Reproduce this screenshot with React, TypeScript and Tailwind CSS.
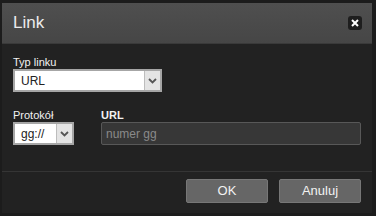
import * as React from "react"

const Chevron = () => (
  <svg width="9" height="6" viewBox="0 0 9 6" className="block">
    <path d="M1 1 L4.5 4.5 L8 1" fill="none" stroke="#555" strokeWidth="1.8" />
  </svg>
)

const SelectBox = ({ value, width }: { value: string; width: string }) => (
  <div className={`flex h-[23px] ${width} border-2 border-[#a6a6a6] bg-white`}>
    <div className="flex flex-1 items-center pl-[6px] text-[12px] text-[#222]">{value}</div>
    <div className="flex w-[16px] items-center justify-center border-l border-[#bdbdbd] bg-[#e4e4e4]">
      <Chevron />
    </div>
  </div>
)

export default function App() {
  return (
    <div className="h-[216px] w-[376px] bg-[#1c1c1c] pt-[3px] pl-[2px] font-['Liberation_Sans',Arial,sans-serif]">
      <div className="flex h-[210px] w-[370px] flex-col bg-[#222222]">
        <div className="flex h-[41px] items-center justify-between border-b border-[#3a3a3a] bg-gradient-to-b from-[#4f4f4f] to-[#464646] pr-[10px] pl-[11px]">
          <span className="text-[17px] text-[#ececec]">Link</span>
          <button className="flex h-[14px] w-[14px] items-center justify-center rounded-[3px] bg-[#1e1e1e]">
            <svg width="8" height="8" viewBox="0 0 8 8">
              <path d="M1 1 L7 7 M7 1 L1 7" stroke="#fff" strokeWidth="2" />
            </svg>
          </button>
        </div>

        <div className="flex flex-1 flex-col px-[11px] pt-[12px]">
          <label className="text-[11px] leading-[13px] text-[#f2f2f2]">Typ linku</label>
          <SelectBox value="URL" width="w-[149px]" />

          <div className="mt-[17px] flex gap-[27px]">
            <div className="flex flex-col">
              <label className="text-[11px] leading-[13px] text-[#f2f2f2]">Protokół</label>
              <SelectBox value="gg://" width="w-[61px]" />
            </div>
            <div className="flex flex-1 flex-col">
              <label className="text-[11px] leading-[13px] font-bold text-[#f2f2f2]">URL</label>
              <div className="flex h-[23px] items-center rounded-[2px] border border-[#585858] bg-[#373737] pl-[4px] text-[12px] text-[#8a8a8a]">
                numer gg
              </div>
            </div>
          </div>
        </div>

        <div className="flex h-[42px] items-start justify-end gap-[11px] border-t border-[#353535] pt-[7px] pr-[11px]">
          <button className="h-[24px] w-[82px] rounded-[2px] border border-[#777] bg-[#666] text-[13px] text-[#f2f2f2]">OK</button>
          <button className="h-[24px] w-[82px] rounded-[2px] border border-[#777] bg-[#666] text-[13px] text-[#f2f2f2]">Anuluj</button>
        </div>
      </div>
    </div>
  )
}
